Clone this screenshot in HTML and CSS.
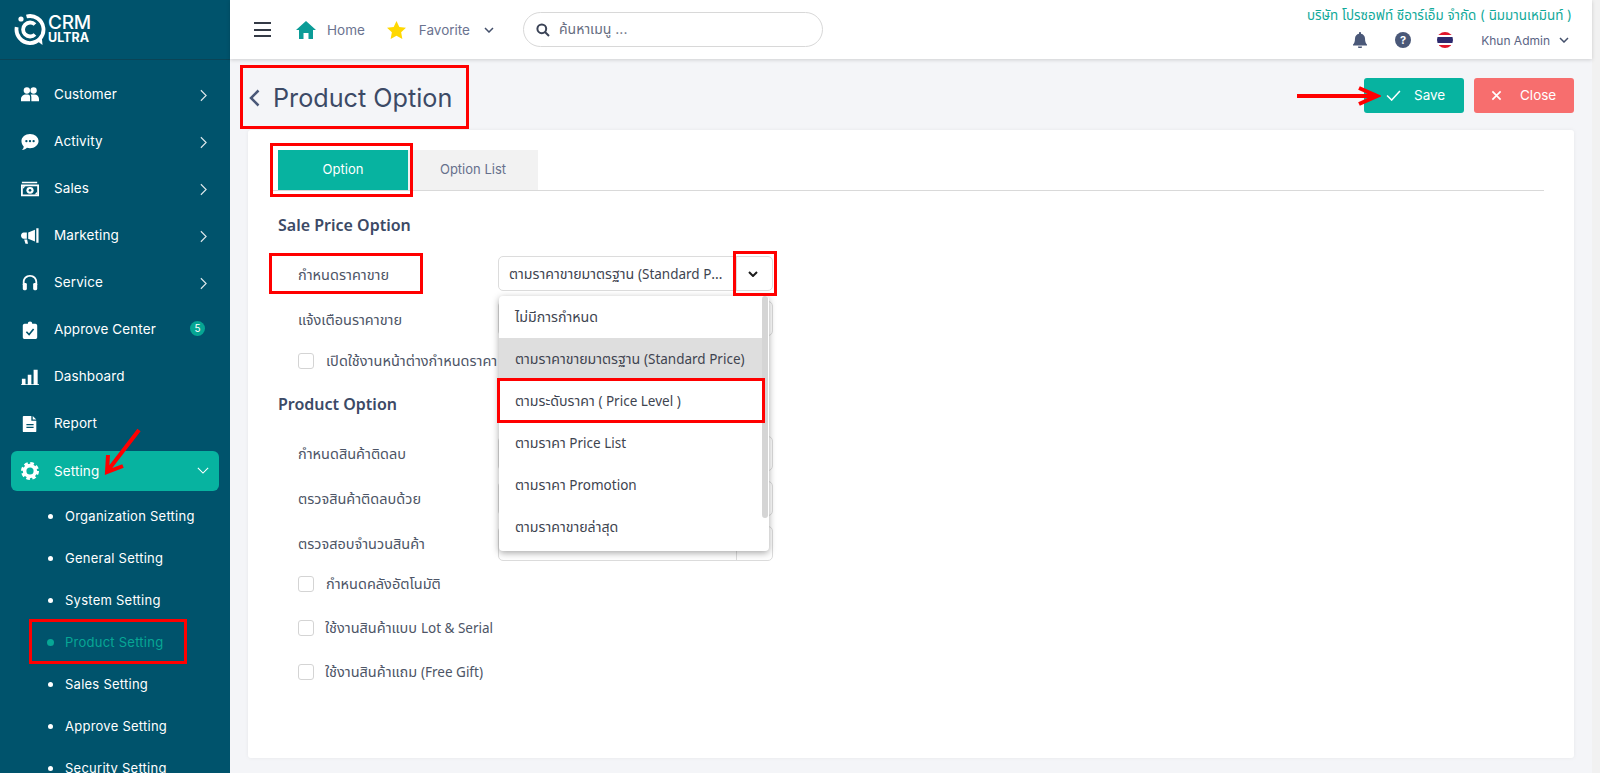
FILE: index.html
```html
<!DOCTYPE html>
<html lang="th">
<head>
<meta charset="utf-8">
<title>Product Option</title>
<link rel="stylesheet" href="styles.css">
</head>
<body>
<div class="app">
  <aside class="sidebar">
    <div class="brand">
      <svg class="brand-mark" viewBox="0 0 32 32"><path d="M12.500 2.500A13.500 13.500 0 1 1 2.700 13.200" fill="none" stroke="#fff" stroke-width="3.800"/><path d="M21 10.500A7 7 0 1 0 21 20.500" fill="none" stroke="#fff" stroke-width="3.800"/><path d="M22 26l6.500 5-.8-9z" fill="#fff"/><circle cx="7" cy="5" r="2.600" fill="#fff"/></svg>
      <div class="brand-text"><div class="brand-top">CRM</div><div class="brand-sub">ULTRA</div></div>
    </div>
    <nav class="nav">
      <a class="nav-item"><svg class="nav-icon" viewBox="0 0 20 20"><circle cx="6.500" cy="5" r="3.500"/><circle cx="14" cy="5" r="3.500"/><path d="M0 17v-2.500C0 11.500 2.500 9.500 5.500 9.500h2c2 0 2.600 1.500 2.600 3V17zM11.500 17v-4.500c0-1 -.3-2-.8-3h4.300c2.800 0 5 2 5 5V17z"/></svg><span class="nav-label">Customer</span><svg class="nav-chev" viewBox="0 0 8 14"><path d="M1 1l6 6-6 6"/></svg></a>
      <a class="nav-item"><svg class="nav-icon" viewBox="0 0 20 20"><path d="M10 1c5.300 0 9.500 3.500 9.500 8s-4.200 8-9.500 8c-1.200 0-2.400-.2-3.400-.5C5.500 17.700 3.500 19 1 19c1.200-1.200 2-2.800 2-4.100C1.400 13.400.5 11.300.5 9 .5 4.500 4.700 1 10 1z"/><circle cx="6" cy="9" r="1.300" fill="#00536c"/><circle cx="10" cy="9" r="1.300" fill="#00536c"/><circle cx="14" cy="9" r="1.300" fill="#00536c"/></svg><span class="nav-label">Activity</span><svg class="nav-chev" viewBox="0 0 8 14"><path d="M1 1l6 6-6 6"/></svg></a>
      <a class="nav-item"><svg class="nav-icon" viewBox="0 0 20 20"><path d="M1 2h17v1.500H1zM0 5h20v13H0zM2 7v9h16V7z" fill-rule="evenodd"/><ellipse cx="10" cy="11.500" rx="4" ry="3.800"/><circle cx="10" cy="11.500" r="1.500" fill="#00536c"/><path d="M2 7h3L2 10zM18 16h-3l3-3z"/></svg><span class="nav-label">Sales</span><svg class="nav-chev" viewBox="0 0 8 14"><path d="M1 1l6 6-6 6"/></svg></a>
      <a class="nav-item"><svg class="nav-icon" viewBox="0 0 20 20"><path d="M17 1.500h2.500v16H17zM15.500 3v13L8 13V6zM6.500 6v7H3C1.300 13 0 11.500 0 9.500S1.300 6 3 6zM3.500 14h3.300l1 4.500H5z"/></svg><span class="nav-label">Marketing</span><svg class="nav-chev" viewBox="0 0 8 14"><path d="M1 1l6 6-6 6"/></svg></a>
      <a class="nav-item"><svg class="nav-icon" viewBox="0 0 20 20"><path d="M10 1C5 1 2 4.500 2 9v3H4V9c0-3.500 2.500-6 6-6s6 2.500 6 6v3h2V9c0-4.500-3-8-8-8z"/><rect x="2" y="10" width="4.500" height="8" rx="1.500"/><rect x="13.500" y="10" width="4.500" height="8" rx="1.500"/></svg><span class="nav-label">Service</span><svg class="nav-chev" viewBox="0 0 8 14"><path d="M1 1l6 6-6 6"/></svg></a>
      <a class="nav-item"><svg class="nav-icon" viewBox="0 0 20 20"><path d="M4 3h3.500a2.500 2.500 0 0 1 5 0H16c1 0 2 1 2 2v13c0 1-1 2-2 2H4c-1 0-2-1-2-2V5c0-1 1-2 2-2z"/><path d="M6 12l3 3 5-6" fill="none" stroke="#00536c" stroke-width="1.800"/></svg><span class="nav-label">Approve Center</span><span class="nav-badge">5</span></a>
      <a class="nav-item"><svg class="nav-icon" viewBox="0 0 20 20"><path d="M1 12h4v6H1zM7.500 7.500h4V18h-4zM14 2h4.500v16H14zM0 18h20v1H0z"/></svg><span class="nav-label">Dashboard</span></a>
      <a class="nav-item"><svg class="nav-icon" viewBox="0 0 20 20"><path d="M3 1h8.500v5.500H17V18c0 .6-.4 1-1 1H3c-.6 0-1-.4-1-1V2c0-.6.4-1 1-1zM13 1l4 4h-4zM6 10v1.500h8V10zM6 13v1.500h8V13z" fill-rule="evenodd"/></svg><span class="nav-label">Report</span></a>
      <a class="nav-item nav-active"><svg class="nav-icon" viewBox="0 0 20 20"><circle cx="10" cy="10" r="6" fill="none" stroke="#fff" stroke-width="4"/><circle cx="10" cy="10" r="8.500" fill="none" stroke="#fff" stroke-width="3" stroke-dasharray="4 2.680"/></svg><span class="nav-label">Setting</span><svg class="nav-chev nav-chev-open" viewBox="0 0 14 8"><path d="M1 1l6 6 6-6"/></svg></a>
      <ul class="subnav">
        <li class="sub-item">Organization Setting</li>
        <li class="sub-item">General Setting</li>
        <li class="sub-item">System Setting</li>
        <li class="sub-item sub-active">Product Setting</li>
        <li class="sub-item">Sales Setting</li>
        <li class="sub-item">Approve Setting</li>
        <li class="sub-item">Security Setting</li>
      </ul>
    </nav>
  </aside>

  <div class="main">
    <header class="topbar">
      <div class="burger"><i></i><i></i><i></i></div>
      <a class="top-link top-home"><svg class="home-icon" viewBox="0 0 20 18"><path d="M10 0l10 9h-3v9h-4.500v-6h-5v6H3V9H0z"/></svg><span>Home</span></a>
      <a class="top-link top-fav"><svg class="star-icon" viewBox="0 0 20 19"><path d="M10 0l3 6.300 7 .9-5.100 4.800 1.300 6.900L10 15.500 3.800 18.900 5.100 12 0 7.200l7-.9z"/></svg><span>Favorite</span><svg class="mini-chev" viewBox="0 0 10 6"><path d="M1 1l4 4 4-4"/></svg></a>
      <div class="search">
        <svg class="search-icon" viewBox="0 0 14 14"><circle cx="5.800" cy="5.800" r="4.400"/><path d="M9 9l4 4"/></svg>
        <span class="search-ph">ค้นหาเมนู ...</span>
      </div>
      <div class="top-right">
        <div class="company">บริษัท โปรซอฟท์ ซีอาร์เอ็ม จำกัด ( นิมมานเหมินท์ )</div>
        <div class="top-tools">
          <svg class="bell" viewBox="0 0 14 16"><path d="M7 0c.6 0 1 .4 1 1v.7c2.400.4 4 2.400 4 4.800 0 3.500 1 5 2 6v1H0v-1c1-1 2-2.500 2-6 0-2.400 1.600-4.400 4-4.800V1c0-.6.400-1 1-1zM5 14.500h4a2 2 0 0 1-4 0z"/></svg>
          <span class="help">?</span>
          <span class="flag"></span>
          <span class="user">Khun Admin</span>
          <svg class="mini-chev" viewBox="0 0 10 6"><path d="M1 1l4 4 4-4"/></svg>
        </div>
      </div>
    </header>

    <div class="content">
      <div class="page-head">
        <svg class="back" viewBox="0 0 11 18"><path d="M9.500 1.500L2 9l7.500 7.500"/></svg>
        <h1 class="page-title">Product Option</h1>
        <div class="actions">
          <button class="btn btn-save"><svg class="btn-check" viewBox="0 0 16 12"><path d="M1 6l5 5 9-10"/></svg>Save</button>
          <button class="btn btn-close"><svg class="btn-x" viewBox="0 0 12 12"><path d="M1.500 1.500l9 9M10.500 1.500l-9 9"/></svg>Close</button>
        </div>
      </div>

      <section class="card">
        <div class="tabs">
          <div class="tab tab-on">Option</div>
          <div class="tab tab-off">Option List</div>
        </div>

        <h2 class="section section-first">Sale Price Option</h2>
        <div class="row row-a">
          <label class="label label-1">กำหนดราคาขาย</label>
          <div class="select">
            <span class="select-value">ตามราคาขายมาตรฐาน <span class="lat">(Standard Price)</span></span>
            <span class="select-btn"><svg class="select-chev" viewBox="0 0 10 6"><path d="M1 1l4 4 4-4"/></svg></span>
            <div class="menu">
              <div class="menu-item">ไม่มีการกำหนด</div>
              <div class="menu-item menu-selected">ตามราคาขายมาตรฐาน <span class="lat">(Standard Price)</span></div>
              <div class="menu-item">ตามระดับราคา <span class="lat">( Price Level )</span></div>
              <div class="menu-item">ตามราคา <span class="lat">Price List</span></div>
              <div class="menu-item">ตามราคา <span class="lat">Promotion</span></div>
              <div class="menu-item">ตามราคาขายล่าสุด</div>
              <span class="menu-thumb"></span>
            </div>
          </div>
        </div>
        <div class="row row-b">
          <label class="label label-2">แจ้งเตือนราคาขาย</label>
          <div class="select"><span class="select-value"></span><span class="select-btn"></span></div>
        </div>
        <div class="check check-first"><span class="box"></span><span class="check-text">เปิดใช้งานหน้าต่างกำหนดราคา</span></div>

        <h2 class="section section-second">Product Option</h2>
        <div class="row row-c">
          <label class="label label-3">กำหนดสินค้าติดลบ</label>
          <div class="select"><span class="select-value"></span><span class="select-btn"></span></div>
        </div>
        <div class="row row-b">
          <label class="label label-3">ตรวจสินค้าติดลบด้วย</label>
          <div class="select"><span class="select-value"></span><span class="select-btn"></span></div>
        </div>
        <div class="row row-b">
          <label class="label label-3">ตรวจสอบจำนวนสินค้า</label>
          <div class="select"><span class="select-value"></span><span class="select-btn"></span></div>
        </div>
        <div class="check check-a"><span class="box"></span><span class="check-text">กำหนดคลังอัตโนมัติ</span></div>
        <div class="check check-b"><span class="box"></span><span class="check-text check-tight">ใช้งานสินค้าแบบ <span class="lat">Lot &amp; Serial</span></span></div>
        <div class="check check-b"><span class="box"></span><span class="check-text check-tight">ใช้งานสินค้าแถม <span class="lat">(Free Gift)</span></span></div>
      </section>
    </div>
  </div>
  <div class="scrollbar"></div>

  <div class="mark mark-title"></div>
  <div class="mark mark-tab"></div>
  <div class="mark mark-label"></div>
  <div class="mark mark-chev"></div>
  <div class="mark mark-level"></div>
  <div class="mark mark-product"></div>
  <svg class="arrow arrow-setting" viewBox="0 0 40 48"><path d="M35 2L5 41M4 27L3 44 19 38" fill="none" stroke="#f00" stroke-width="4"/></svg>
  <svg class="arrow arrow-save" viewBox="0 0 84 20"><path d="M0 10h76" stroke="#f00" stroke-width="4"/><path d="M62 2l18 8-18 8" fill="none" stroke="#f00" stroke-width="4"/></svg>
</div>
</body>
</html>
```

FILE: styles.css
```css
* { box-sizing: border-box; }
html, body { margin: 0; padding: 0; height: 100%; overflow: hidden; }
body {
  font-family: "Inter", "Noto Sans", "Noto Sans Thai", sans-serif;
  font-size: 13px;
  color: #44506b;
  background: #f4f5f8;
}
.app { position: relative; display: flex; width: 1600px; height: 773px; overflow: hidden; }

/* Sidebar */
.sidebar { flex: 0 0 230px; height: 773px; background: #00536c; color: #fff; overflow: hidden; }
.brand { display: flex; align-items: center; height: 60px; padding: 0 0 0 14px; border-bottom: 1px solid #0a4456; }
.brand-mark { width: 32px; height: 32px; }
.brand-text { margin-left: 2px; font-weight: 500; line-height: 1; }
.brand-top { font-size: 19px; line-height: 17px; letter-spacing: -.3px; }
.brand-sub { font-size: 12.500px; line-height: 14px; font-weight: 700; }
.nav { padding-top: 11px; }
.nav-item { display: flex; align-items: center; height: 47px; padding: 0 0 0 21px; margin: 0 11px 0 0; }
.nav-icon { width: 18px; height: 18px; fill: #fff; flex: none; }
.nav-label { margin: -2px 0 0 15px; font-size: 13.500px; letter-spacing: .1px; flex: 1; }
.nav-chev { width: 7px; height: 13px; margin: 2px 12px 0 0; fill: none; stroke: #dfe9ec; stroke-width: 1.300; flex: none; }
.nav-badge { width: 15px; height: 15px; margin: -3px 14px 0 0; border-radius: 50%; background: #06a593; font-size: 10px; line-height: 15px; text-align: center; flex: none; }
.nav-active { height: 40px; margin: 3.500px 11px 3.500px 11px; padding-left: 10px; background: #07b3a0; border-radius: 6px; }
.nav-active .nav-label { margin-top: 0; }
.nav-chev-open { width: 12px; height: 7px; margin: 0 10px 0 0; stroke: #fff; }
.subnav { list-style: none; margin: 4px 0 0; padding: 0 0 0 65px; }
.sub-item { position: relative; height: 42px; line-height: 42px; font-size: 13px; white-space: nowrap; letter-spacing: .25px; }
.sub-item::before { content: ""; position: absolute; left: -17px; top: 19px; width: 5px; height: 5px; border-radius: 50%; background: #fff; }
.sub-active { color: #07a795; }
.sub-active::before { left: -18px; top: 18px; width: 7px; height: 7px; background: #07a795; }

/* Main column */
.main { flex: 1; min-width: 0; display: flex; flex-direction: column; }
.scrollbar { flex: 0 0 8px; background: #f1f1f1; }
.topbar { position: relative; display: flex; align-items: center; height: 59px; padding: 0 20px 0 24px; background: #fff; box-shadow: 0 1px 4px rgba(0,0,0,.16); flex: none; }
.burger { display: flex; flex-direction: column; gap: 4.500px; width: 17px; }
.burger i { display: block; height: 2px; background: #343a46; }
.top-link { display: flex; align-items: center; font-size: 13.500px; color: #6b7390; }
.top-home { margin-left: 25px; }
.home-icon { width: 20px; height: 18px; fill: #0b9c97; margin-right: 11px; }
.top-fav { margin-left: 22px; }
.star-icon { width: 19px; height: 18px; fill: #ffd800; margin-right: 13px; }
.mini-chev { width: 10px; height: 6px; fill: none; stroke: #44506b; stroke-width: 1.500; margin-left: 14px; }
.search { display: flex; align-items: center; width: 300px; height: 35px; margin-left: 29px; padding: 0 12px; border: 1px solid #d8d8d8; border-radius: 18px; }
.search-icon { width: 14px; height: 14px; fill: none; stroke: #3b4356; stroke-width: 2; }
.search-ph { margin-left: 9px; font-size: 14px; color: #666d80; }
.top-right { margin-left: auto; display: flex; flex-direction: column; align-items: flex-end; }
.company { font-size: 13.400px; color: #11a99a; line-height: 20px; margin-top: -2px; }
.top-tools { display: flex; align-items: center; height: 24px; margin-top: 3px; padding-right: 3px; }
.bell { width: 14px; height: 16px; fill: #4a5878; }
.help { width: 16px; height: 16px; margin-left: 28px; border-radius: 50%; background: #4a5878; color: #fff; font-size: 11px; font-weight: 700; line-height: 16px; text-align: center; }
.flag { width: 16px; height: 16px; margin-left: 26px; border-radius: 50%; background: linear-gradient(#e0162b 0 17%, #fff 17% 33%, #2d2a6e 33% 67%, #fff 67% 83%, #e0162b 83%); }
.user { margin-left: 28px; font-size: 12px; color: #5a6484; }
.top-tools .mini-chev { margin-left: 9px; }

/* Content */
.content { flex: 1; padding: 0 18px 15px; min-height: 0; display: flex; flex-direction: column; }
.page-head { display: flex; align-items: center; height: 71px; flex: none; padding-top: 6px; }
.back { width: 11px; height: 18px; margin-left: 1px; fill: none; stroke: #4a5878; stroke-width: 2.500; }
.page-title { margin: 0 0 0 13px; font-size: 25.200px; font-weight: 400; color: #3c4a66; }
.actions { margin-left: auto; display: flex; gap: 10px; margin-top: -5px; }
.btn { display: flex; align-items: center; width: 100px; height: 35px; padding: 0; border: 0; border-radius: 3px; color: #fff; font: inherit; font-size: 13.500px; }
.btn-save { background: #07b3a0; padding-left: 22px; }
.btn-close { background: #f76e6e; padding-left: 17px; }
.btn-check { width: 15px; height: 11px; margin-right: 13px; fill: none; stroke: #fff; stroke-width: 1.600; }
.btn-x { width: 11px; height: 11px; margin-right: 18px; fill: none; stroke: #fff; stroke-width: 1.800; }

.card { flex: 1; background: #fff; border-radius: 3px; padding: 20px 30px 0 24px; box-shadow: 0 0 4px rgba(0,0,0,.06); font-family: "Noto Sans", "Noto Sans Thai", sans-serif; font-size: 14.500px; }
.lat { font-size: 13.500px; }
.tabs { display: flex; height: 41px; padding-left: 6px; border-bottom: 1px solid #d9d9d9; font-family: "Inter", sans-serif; }
.tab { width: 130px; height: 40px; line-height: 38px; text-align: center; font-size: 13px; }
.tab-on { background: #07b3a0; color: #fff; }
.tab-off { background: #f2f2f2; color: #66708c; }

.section { margin: 0 0 0 6px; font-size: 16px; font-weight: 600; line-height: 24px; color: #3c4a66; }
.section-first { margin-top: 22px; }
.section-second { margin-top: 15px; }
.row { display: grid; grid-template-columns: 226px 275px; align-items: center; }
.row-a { margin-top: 19px; }
.row-b { margin-top: 10px; }
.row-c { margin-top: 20px; }
.label { padding-left: 26px; color: #4d5566; }
.label-1 { padding-top: 3px; }
.label-2 { padding-top: 3px; }
.label-3 { padding-top: 1px; }
.select { position: relative; display: flex; height: 35px; border: 1px solid #dcdcdc; border-radius: 5px; background: #fff; color: #3e4450; font-size: 14.200px; }
.select-value { flex: 1; min-width: 0; padding: 0 10px; line-height: 33px; overflow: hidden; white-space: nowrap; text-overflow: ellipsis; }
.select-btn { flex: 0 0 36px; display: flex; align-items: center; justify-content: center; padding-right: 3px; border-left: 1px solid #dcdcdc; }
.select-chev { width: 10px; height: 6px; fill: none; stroke: #1c1c1c; stroke-width: 2; }
.menu { position: absolute; z-index: 5; left: 0; top: 39px; width: 270px; height: 255px; overflow: hidden; background: #fff; border-radius: 4px; box-shadow: 0 2px 7px rgba(0,0,0,.35); color: #3e4450; }
.menu-item { height: 42px; padding: 0 16px; line-height: 42px; white-space: nowrap; }
.menu-selected { width: 263px; background: #dedede; }
.menu-thumb { position: absolute; right: 1px; top: 0; width: 6px; height: 222px; border-radius: 3px; background: #d5d5d5; }
.check { display: flex; align-items: center; padding-left: 26px; color: #4d5566; }
.check-first { height: 32px; margin-top: 9px; }
.check-a { height: 30px; margin-top: 8px; }
.check-b { height: 30px; margin-top: 14px; }
.box { width: 16px; height: 16px; border: 1px solid #d4d4d4; border-radius: 3px; background: #fff; flex: none; }
.check-text { margin-left: 12px; white-space: nowrap; }
.check-tight { margin-left: 11px; }

/* Red annotations laid over the screenshot */
.mark { position: absolute; border: 3px solid #f00; z-index: 10; }
.mark-title { left: 240px; top: 65px; width: 229px; height: 64px; }
.mark-tab { left: 270px; top: 143px; width: 143px; height: 54px; }
.mark-label { left: 269px; top: 253px; width: 154px; height: 41px; }
.mark-chev { left: 733px; top: 251px; width: 44px; height: 45px; }
.mark-level { left: 497px; top: 378px; width: 268px; height: 45px; }
.mark-product { left: 29px; top: 619px; width: 158px; height: 45px; }
.arrow { position: absolute; z-index: 10; }
.arrow-setting { left: 104px; top: 428px; width: 40px; height: 48px; }
.arrow-save { left: 1297px; top: 86px; width: 84px; height: 20px; }
```
